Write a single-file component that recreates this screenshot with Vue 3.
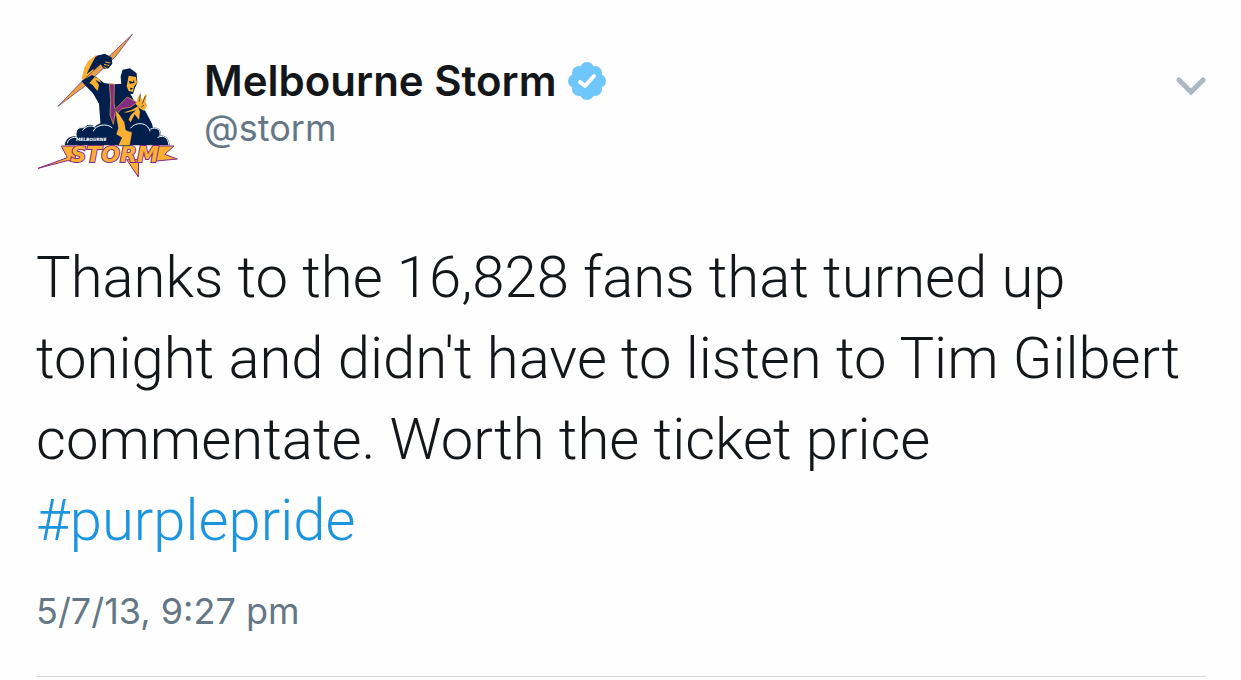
<script setup>
import { ref } from 'vue';

const tweet = ref({
  name: 'Melbourne Storm',
  handle: '@storm',
  text: "Thanks to the 16,828 fans that turned up tonight and didn't have to listen to Tim Gilbert commentate. Worth the ticket price",
  hashtag: '#purplepride',
  date: '5/7/13, 9:27 pm',
});
</script>

<template>
  <article class="tweet">
    <header class="tweet-header">
      <a href="#" class="avatar" aria-label="Melbourne Storm">
        <svg viewBox="18 24 432 441" aria-hidden="true">
          <!-- raised arm -->
          <path d="M198 91 L174 108 L163 128 L155 160 L164 172 L208 128 L212 108 Z" fill="#fbb034" />
          <path d="M196 96 L224 87 L244 96 L245 112 L232 130 L214 128 L194 144 L190 132 L170 148 L182 122 Z" fill="#001f4d" />
          <!-- spear -->
          <path d="M308 27 L250 82 L150 175 L84 244 L164 184 L258 93 Z" fill="#e9a04a" stroke="#5a2d62" stroke-width="2" />
          <path d="M200 92 L224 87 L245 97 L247 116 L236 130 L222 132 L212 118 L196 108 Z" fill="#001f4d" />
          <path d="M222 118 L238 122 M226 111 L241 114 M221 125 L232 131" stroke="#fbb034" stroke-width="3" />
          <path d="M154 168 L186 150 L202 158 L222 174 L248 178 L282 176 L300 204 L318 238 L346 258 L366 296 L372 320 L212 320 L211 292 L207 236 L192 208 L168 184 Z" fill="#001f4d" />
          <path d="M178 174 L194 156 L208 162 L218 186 L214 214 L202 204 L188 180 Z" fill="#fbb034" />
          <path d="M184 178 L203 198 L207 180 L196 164 L220 178 L222 230 L210 240 L190 206 Z" fill="#001f4d" />
          <!-- sash -->
          <path d="M238 176 L253 177 L252 232 L256 260 L250 298 L240 270 L242 226 Z" fill="#812b84" stroke="#fbb034" stroke-width="2" />
          <path d="M256 252 L292 216 L322 232 L302 246 L274 252 L256 272 Z" fill="#812b84" stroke="#fbb034" stroke-width="2" />
          <path d="M282 262 L306 254 L324 244 L330 260 L327 284 L314 268 L302 292 L296 284 L304 266 Z" fill="#fbb034" />
          <path d="M286 264 L318 256 L302 270 L292 284 Z" fill="#001f4d" />
          <!-- head -->
          <path d="M278 134 L300 130 L320 145 L322 174 L315 188 L309 207 L292 206 L274 180 L272 154 Z" fill="#001f4d" />
          <path d="M296 152 L318 156 L321 174 L312 184 L309 201 L296 198 L290 184 Z" fill="#fbb034" />
          <path d="M297 168 L309 171 L312 163 L313 174 L299 176 Z M300 188 L310 190 L302 195 Z" fill="#001f4d" />
          <!-- left hand -->
          <path d="M318 236 L323 218 L331 203 L333 219 L338 225 L346 208 L351 210 L346 230 L352 242 L341 257 L326 248 Z" fill="#fbb034" />
          <path d="M331 208 L328 230 M346 213 L337 236 M342 240 L333 247" fill="none" stroke="#001f4d" stroke-width="2" />
          <!-- clouds -->
          <path d="M104 361 C106 342 122 329 140 335 C136 316 146 303 164 307 C174 296 188 298 194 306 C206 291 236 290 250 300 L298 304 C318 286 356 292 364 310 C384 302 396 318 392 332 C408 330 418 344 419 361 Z" fill="#001f4d" />
          <path d="M112 354 C116 340 130 333 142 339 M138 334 C134 312 148 304 164 309 M158 316 C170 300 188 300 196 308 M190 318 C198 298 232 294 246 308 M302 309 C320 288 352 292 360 318 M362 312 C382 302 394 318 390 332 M384 337 C404 326 416 344 416 358" fill="none" stroke="#ffffff" stroke-width="3" stroke-linecap="round" />
          <!-- wordmark -->
          <path d="M24 430 L112 398 L94 363 L136 363 L136 408 L112 407 Z" fill="#fbb034" stroke="#812b84" stroke-width="3" />
          <path d="M290 404 L326 404 L325 456 Z" fill="#fbb034" stroke="#812b84" stroke-width="3" />
          <path d="M370 363 L432 363 L404 388 L442 402 L370 409 Z" fill="#fbb034" stroke="#812b84" stroke-width="3" />
          <text x="254" y="412" text-anchor="middle" class="logo-storm">STORM</text>
          <text x="138" y="348" class="logo-city">MELBOURNE</text>
          <!-- lightning bolt -->
          <path d="M254 252 L270 270 L284 292 L288 315 L307 322 L300 362 L264 362 L275 338 L258 328 L264 310 L260 286 Z" fill="#fbb034" stroke="#001f4d" stroke-width="2" />
        </svg>
      </a>
      <div class="author">
        <div class="name-row">
          <a href="#" class="name">{{ tweet.name }}</a>
          <svg class="verified" viewBox="0 0 38 38" role="img" aria-label="Verified account">
            <g fill="#6ec6fa">
              <circle cx="19" cy="19" r="15" />
              <circle cx="19" cy="7" r="7" />
              <circle cx="27" cy="11" r="7" />
              <circle cx="31" cy="19" r="7" />
              <circle cx="27" cy="27" r="7" />
              <circle cx="19" cy="31" r="7" />
              <circle cx="11" cy="27" r="7" />
              <circle cx="7" cy="19" r="7" />
              <circle cx="11" cy="11" r="7" />
            </g>
            <path d="M12 20 L17 24 L26 14" fill="none" stroke="#ffffff" stroke-width="4" stroke-linecap="round" stroke-linejoin="round" />
          </svg>
        </div>
        <a href="#" class="handle">{{ tweet.handle }}</a>
      </div>
      <button type="button" class="menu-button" aria-label="More options">
        <svg viewBox="0 0 30 20" aria-hidden="true">
          <path d="M3 4 L15 16 L27 4" fill="none" stroke="#aab8c2" stroke-width="5" stroke-linecap="round" />
        </svg>
      </button>
    </header>

    <p class="tweet-text">{{ tweet.text }} <a href="#" class="hashtag">{{ tweet.hashtag }}</a></p>
    <time class="date" datetime="2013-07-05T21:27">{{ tweet.date }}</time>
  </article>
</template>

<style>
body {
  margin: 0;
  background-color: #fefefe;
}
</style>

<style scoped>
.tweet {
  margin: 0 35px 0 36px;
  padding-top: 33px;
  border-bottom: 1px solid #d5d9dc;
  color: #14171a;
  font-family: Inter, 'Liberation Sans', sans-serif;
}

a {
  color: inherit;
  text-decoration: none;
}

.tweet-header {
  display: flex;
  align-items: flex-start;
}

.avatar {
  flex: none;
  width: 144px;
  height: 147px;
  margin-right: 24px;
}

.avatar svg {
  display: block;
  width: 100%;
  height: 100%;
}

.logo-storm {
  font: italic bold 66px 'DejaVu Sans', sans-serif;
  fill: #fbb034;
  stroke: #812b84;
  stroke-width: 6px;
  paint-order: stroke;
}

.logo-city {
  font: italic bold 13px 'DejaVu Sans', sans-serif;
  fill: #ffffff;
}

.author {
  flex: 1;
  padding-top: 24px;
}

.name-row {
  display: flex;
  align-items: center;
  gap: 12px;
}

.name {
  font-size: 42px;
  font-weight: 600;
  line-height: 48px;
}

.verified {
  width: 38px;
  height: 38px;
}

.handle {
  display: block;
  color: #657786;
  font-size: 36px;
  line-height: 46px;
}

.menu-button {
  margin-top: 43px;
  padding: 0;
  border: none;
  background: none;
  cursor: pointer;
}

.menu-button svg {
  display: block;
  width: 30px;
  height: 20px;
}

.tweet-text {
  margin: 57px 0 0;
  font-family: Roboto, Inter, sans-serif;
  font-size: 58px;
  font-weight: 300;
  line-height: 81px;
}

.hashtag {
  color: #1b95e0;
}

.date {
  display: block;
  margin-top: 27px;
  padding-bottom: 42px;
  color: #657786;
  font-size: 36px;
  line-height: 46px;
}
</style>
